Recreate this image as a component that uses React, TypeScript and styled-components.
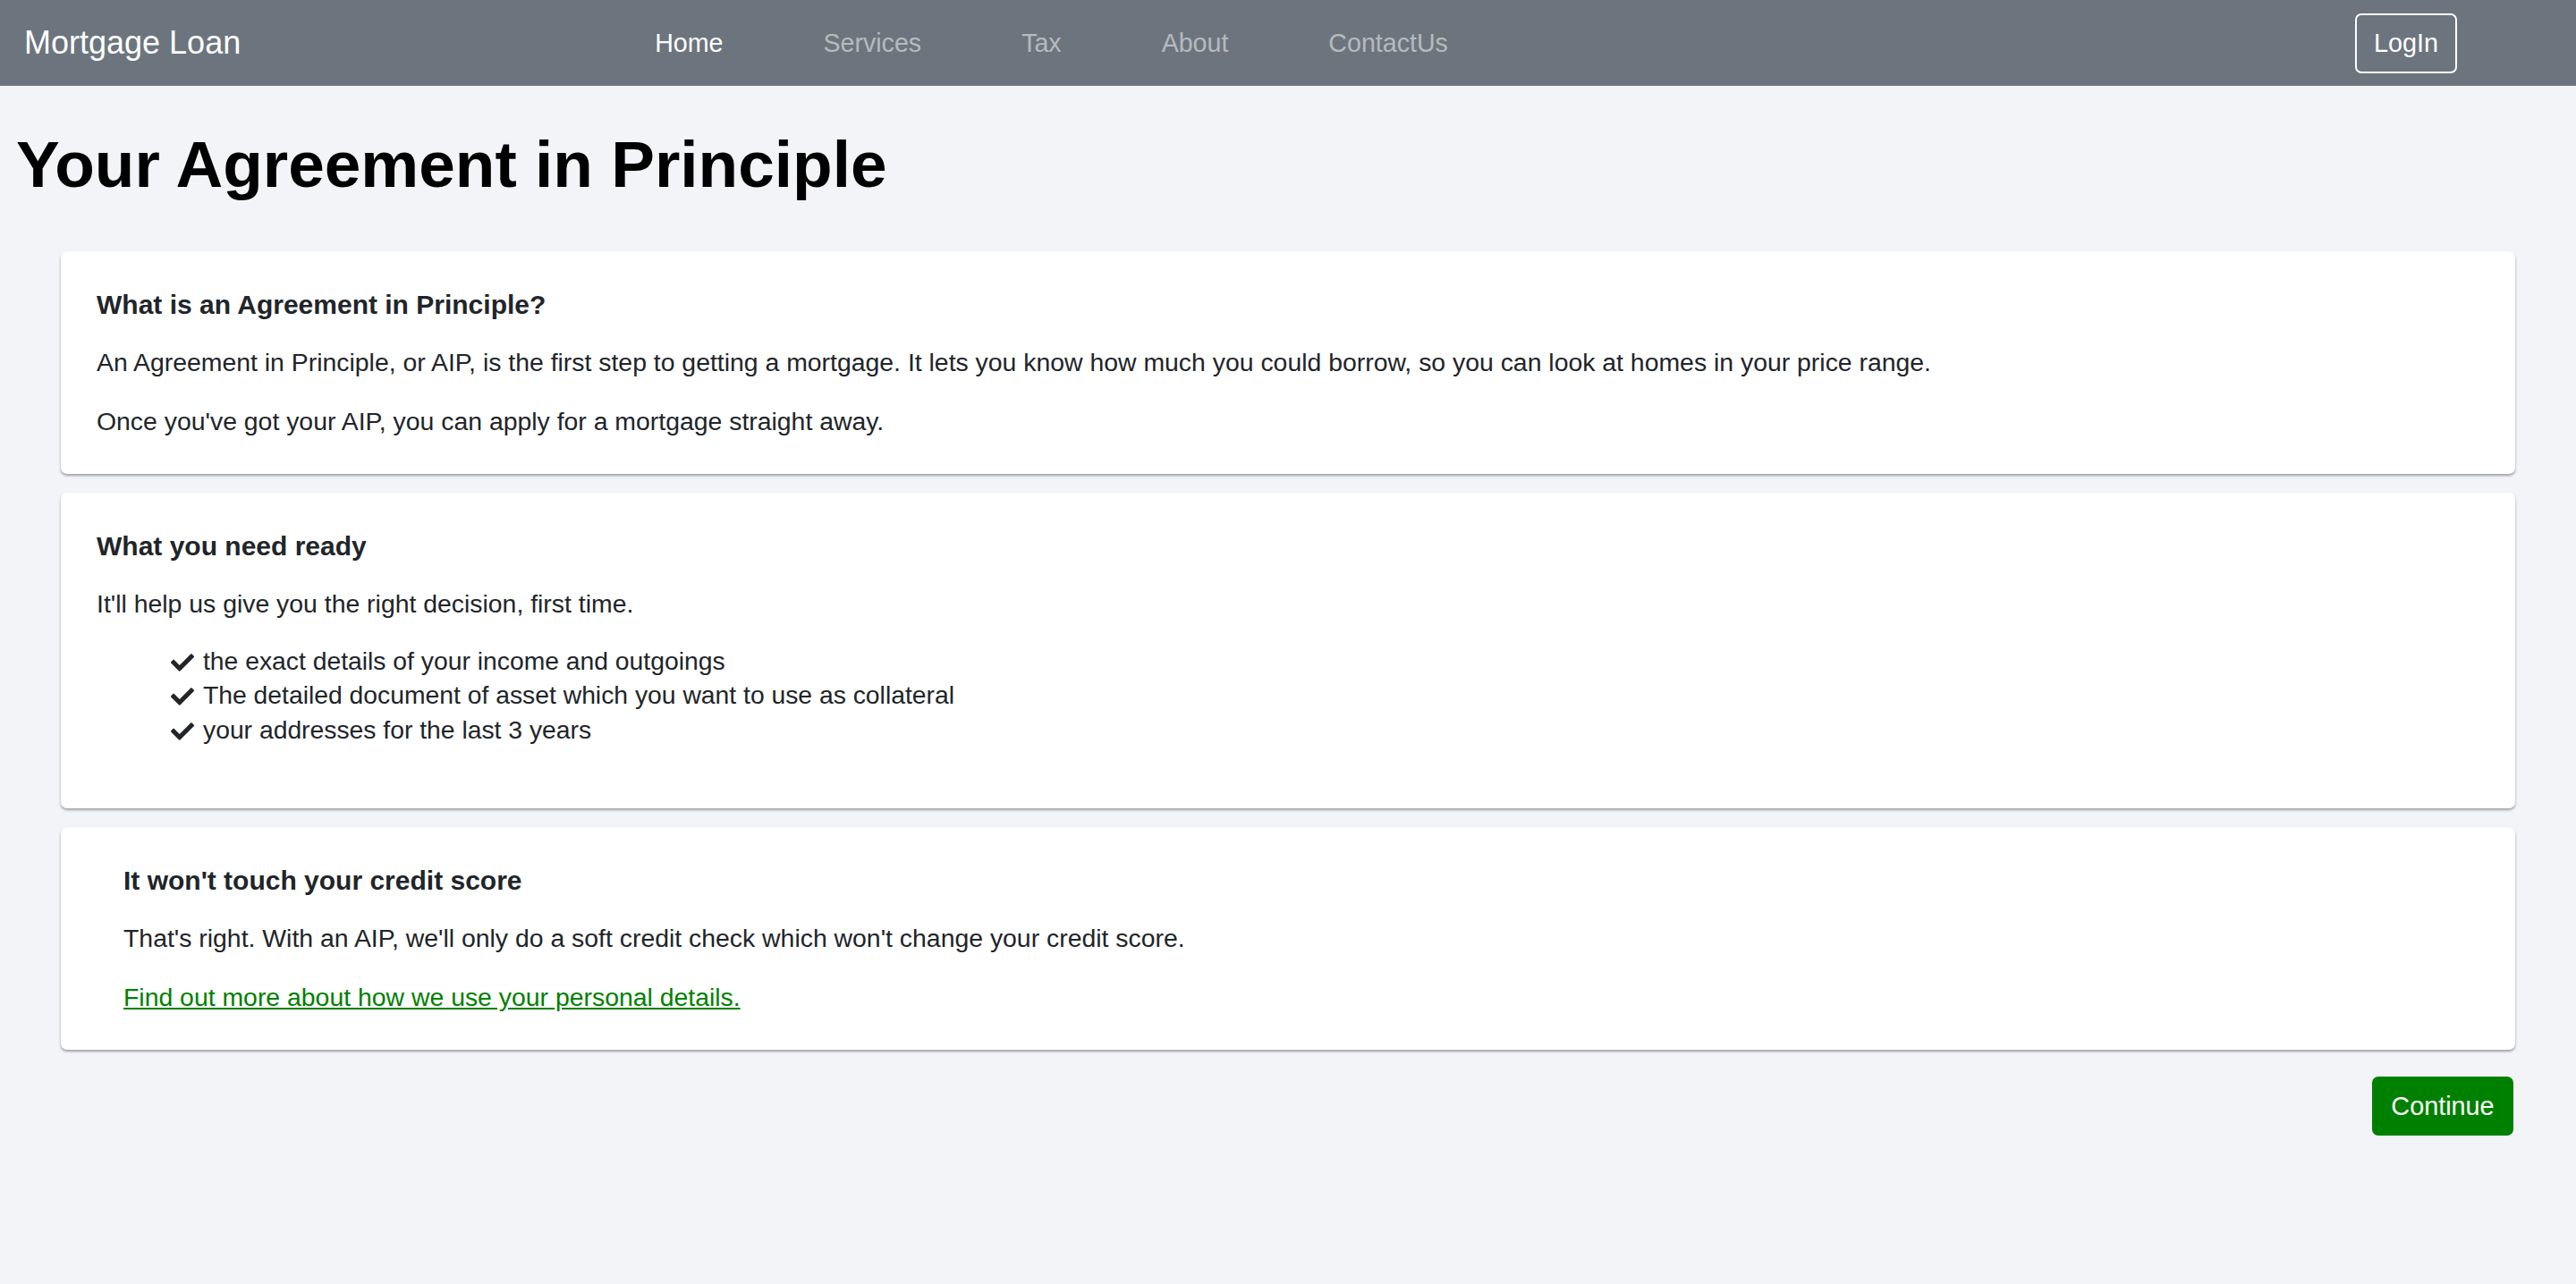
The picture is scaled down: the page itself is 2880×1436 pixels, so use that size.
import React from 'react'
import styled, { createGlobalStyle } from 'styled-components'
import { FaCheck } from 'react-icons/fa'

const GlobalStyle = createGlobalStyle`
  body {
    margin: 0;
    background: #f3f4f8;
    color: #212529;
    font-family: "Liberation Sans", Arial, sans-serif;
  }
`

const Navbar = styled.nav`
  display: flex;
  align-items: center;
  height: 96px;
  padding: 0 133px 0 27px;
  background: #6c757d;
`

const Brand = styled.a`
  font-size: 36px;
  color: #fff;
  text-decoration: none;
  white-space: nowrap;
`

const NavList = styled.ul`
  display: flex;
  gap: 112px;
  margin: 0 0 0 463px;
  padding: 0;
  list-style: none;
`

const NavLink = styled.a<{ active?: boolean }>`
  font-size: 28.6px;
  color: ${({ active }) => (active ? '#fff' : 'rgba(255, 255, 255, 0.5)')};
  text-decoration: none;
`

const LoginButton = styled.button`
  margin-left: auto;
  width: 114px;
  height: 67px;
  border: 2px solid #fff;
  border-radius: 7px;
  background: transparent;
  color: #fff;
  font-family: inherit;
  font-size: 28.8px;
`

const PageTitle = styled.h1`
  margin: 44px 0 53px;
  padding-left: 18px;
  font-size: 73px;
  line-height: 1.2;
  font-weight: 700;
  color: #000;
`

const Main = styled.main`
  display: flex;
  flex-direction: column;
  gap: 21px;
  padding: 0 68px 80px;
`

const Card = styled.section<{ inset?: boolean }>`
  padding: 42px 40px 37px ${({ inset }) => (inset ? '70px' : '40px')};
  background: #fff;
  border-radius: 7px;
  box-shadow: 0 2px 3px rgba(0, 0, 0, 0.35);
`

const CardTitle = styled.h5`
  margin: 0 0 25px;
  font-size: 30px;
  line-height: 1.2;
  font-weight: 700;
  color: #212529;
`

const Text = styled.p`
  margin: 0 0 23px;
  font-size: 28.4px;
  line-height: 43px;

  &:last-child {
    margin-bottom: 0;
  }
`

const CheckList = styled.ul`
  margin: 0 0 32px;
  padding-left: 83px;
  list-style: none;
`

const CheckItem = styled.li`
  font-size: 28.3px;
  line-height: 38.5px;

  svg {
    margin-right: 10px;
    vertical-align: -5px;
    color: #212529;
  }
`

const GreenLink = styled.a`
  color: #008000;
  text-decoration: underline;
`

const Actions = styled.div`
  display: flex;
  justify-content: flex-end;
  margin-top: 9px;
  padding-right: 2px;
`

const ContinueButton = styled.button`
  width: 158px;
  height: 66px;
  border: none;
  border-radius: 7px;
  background: #008000;
  color: #fff;
  font-family: inherit;
  font-size: 28.8px;
`

const links = ['Home', 'Services', 'Tax', 'About', 'ContactUs']

const needs = [
  'the exact details of your income and outgoings',
  'The detailed document of asset which you want to use as collateral',
  'your addresses for the last 3 years',
]

const App = () => {
  return (
    <>
      <GlobalStyle />
      <Navbar>
        <Brand href="#">Mortgage Loan</Brand>
        <NavList>
          {links.map((l, i) => (
            <li key={l}>
              <NavLink href="#" active={i === 0}>
                {l}
              </NavLink>
            </li>
          ))}
        </NavList>
        <LoginButton>LogIn</LoginButton>
      </Navbar>

      <PageTitle>Your Agreement in Principle</PageTitle>

      <Main>
        <Card>
          <CardTitle>What is an Agreement in Principle?</CardTitle>
          <Text>
            An Agreement in Principle, or AIP, is the first step to getting a mortgage. It lets you know how much you
            could borrow, so you can look at homes in your price range.
          </Text>
          <Text>Once you've got your AIP, you can apply for a mortgage straight away.</Text>
        </Card>

        <Card>
          <CardTitle>What you need ready</CardTitle>
          <Text>It'll help us give you the right decision, first time.</Text>
          <CheckList>
            {needs.map(n => (
              <CheckItem key={n}>
                <FaCheck size={26} />
                {n}
              </CheckItem>
            ))}
          </CheckList>
        </Card>

        <Card inset>
          <CardTitle>It won't touch your credit score</CardTitle>
          <Text>That's right. With an AIP, we'll only do a soft credit check which won't change your credit score.</Text>
          <Text>
            <GreenLink href="#">Find out more about how we use your personal details.</GreenLink>
          </Text>
        </Card>

        <Actions>
          <ContinueButton>Continue</ContinueButton>
        </Actions>
      </Main>
    </>
  )
}

export default App
